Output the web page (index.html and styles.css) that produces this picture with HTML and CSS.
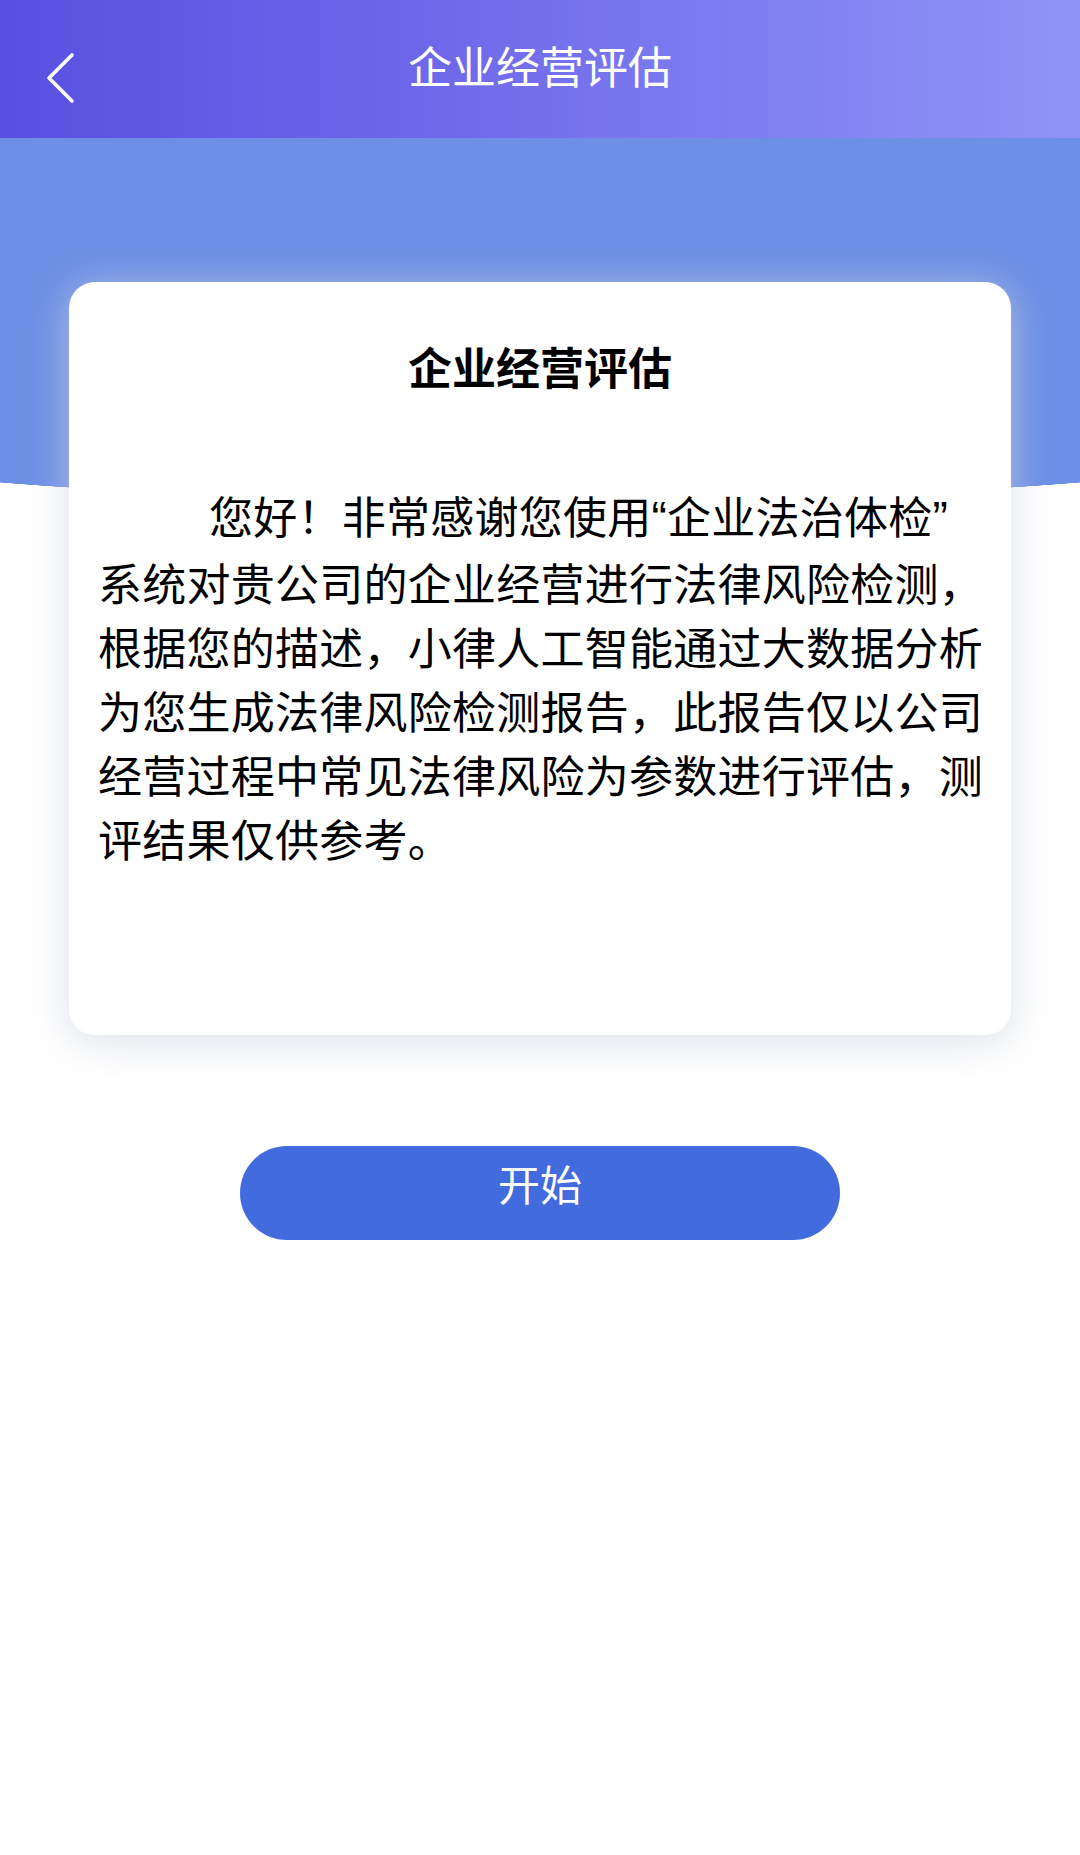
FILE: index.html
```html
<!DOCTYPE html>
<html lang="zh-CN">
<head>
<meta charset="utf-8">
<title>企业经营评估</title>
<link rel="stylesheet" href="styles.css">
</head>
<body>
  <header class="topbar">
    <div class="back">
      <svg width="34" height="52" viewBox="0 0 34 52" aria-hidden="true">
        <path d="M28 3 L5 26 L28 49" fill="none" stroke="#ffffff" stroke-width="3.6" stroke-linecap="round" stroke-linejoin="round"/>
      </svg>
    </div>
    <h1 class="topbar-title">企业经营评估</h1>
    <div class="spacer"></div>
  </header>

  <main class="main">
    <section class="card">
      <h2 class="card-title">企业经营评估</h2>
      <div class="card-text">
        <span class="line first">您好！非常感谢您使用<span class="q">“</span>企业法治体检<span class="q">”</span></span>
        <span class="line">系统对贵公司的企业经营进行法律风险检测，</span>
        <span class="line">根据您的描述，小律人工智能通过大数据分析</span>
        <span class="line">为您生成法律风险检测报告，此报告仅以公司</span>
        <span class="line">经营过程中常见法律风险为参数进行评估，测</span>
        <span class="line">评结果仅供参考。</span>
      </div>
    </section>

    <div class="actions">
      <button class="start-btn" type="button">开始</button>
    </div>
  </main>
</body>
</html>
```

FILE: styles.css
```css
* {
  box-sizing: border-box;
}

html, body {
  margin: 0;
  padding: 0;
  background: #ffffff;
}

body {
  width: 1080px;
  min-height: 1855px;
  font-family: "Noto Sans CJK SC", "Noto Sans", sans-serif;
  color: #000000;
}

.topbar {
  height: 138px;
  display: grid;
  grid-template-columns: 1fr auto 1fr;
  align-items: center;
  background: linear-gradient(90deg, #5850e0 0%, #6e68ea 40%, #8283f2 75%, #9093f6 100%);
}

.back {
  padding-left: 44px;
  padding-top: 18px;
  display: flex;
  align-items: center;
}

.back svg {
  display: block;
}

.topbar-title {
  margin: 0;
  font-size: 44px;
  font-weight: 400;
  line-height: 64px;
  color: #ffffff;
  letter-spacing: 0;
  padding-bottom: 8px;
}

.main {
  padding-top: 144px;
  background:
    radial-gradient(ellipse 756px 61px at 540px 302px, #6d8fe5 99.5%, rgba(109,143,229,0) 100%) no-repeat,
    linear-gradient(#6d8fe5, #6d8fe5) 0 0 / 100% 302px no-repeat;
}

.card {
  margin: 0 69px;
  background: #ffffff;
  border-radius: 26px;
  padding: 52px 29px 165px;
  box-shadow: 0 6px 38px 2px rgba(205, 210, 222, 0.65);
}

.card-title {
  margin: 0;
  text-align: center;
  font-size: 44px;
  line-height: 64px;
  font-weight: 700;
  color: #000000;
}

.card-text {
  margin-top: 85px;
  font-size: 44px;
  line-height: 64px;
  letter-spacing: 0.25px;
  color: #000000;
}

.line {
  display: block;
  white-space: nowrap;
}

.line.first {
  padding-left: 111px;
}

.q {
  font-family: "Liberation Sans", sans-serif;
  font-size: 46px;
}

.actions {
  display: flex;
  justify-content: center;
  padding-top: 111px;
}

.start-btn {
  width: 600px;
  height: 94px;
  border: none;
  border-radius: 47px;
  background: #426bde;
  color: #ffffff;
  font-family: "Noto Sans CJK SC", "Noto Sans", sans-serif;
  font-size: 42px;
  line-height: 60px;
  padding: 0 0 20px;
  cursor: pointer;
}
```
